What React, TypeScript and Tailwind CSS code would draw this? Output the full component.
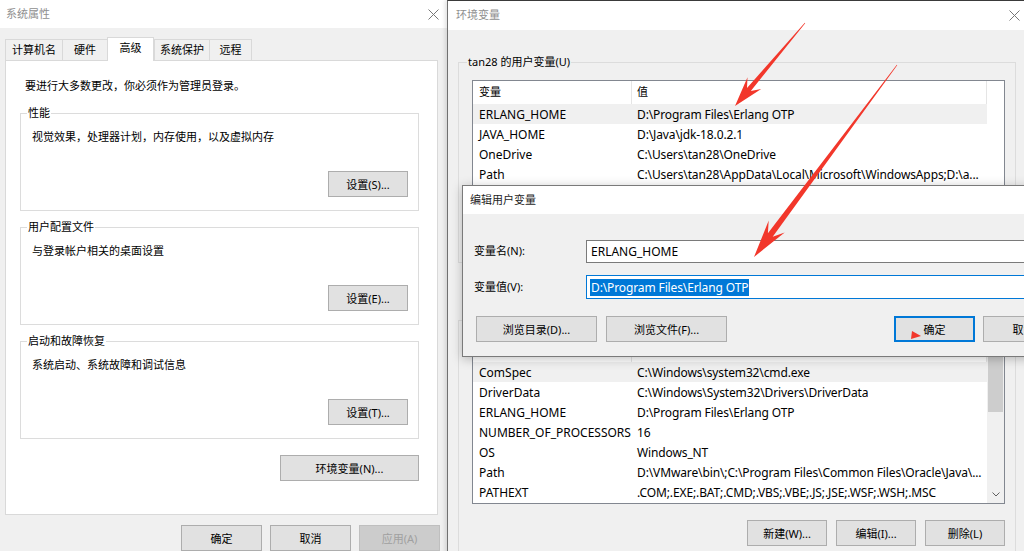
import clsx from "clsx";
import type { ReactNode } from "react";

const FONT = "font-['Noto_Sans','Noto_Sans_CJK_SC',sans-serif]";

type Var = { name: string; value: string };

const USER_VARS: Var[] = [
  { name: "ERLANG_HOME", value: String.raw`D:\Program Files\Erlang OTP` },
  { name: "JAVA_HOME", value: String.raw`D:\Java\jdk-18.0.2.1` },
  { name: "OneDrive", value: String.raw`C:\Users\tan28\OneDrive` },
  {
    name: "Path",
    value: String.raw`C:\Users\tan28\AppData\Local\Microsoft\WindowsApps;D:\a...`,
  },
];

const SYSTEM_VARS: Var[] = [
  { name: "ComSpec", value: String.raw`C:\Windows\system32\cmd.exe` },
  {
    name: "DriverData",
    value: String.raw`C:\Windows\System32\Drivers\DriverData`,
  },
  { name: "ERLANG_HOME", value: String.raw`D:\Program Files\Erlang OTP` },
  { name: "NUMBER_OF_PROCESSORS", value: "16" },
  { name: "OS", value: "Windows_NT" },
  {
    name: "Path",
    value: String.raw`D:\VMware\bin\;C:\Program Files\Common Files\Oracle\Java\...`,
  },
  {
    name: "PATHEXT",
    value: ".COM;.EXE;.BAT;.CMD;.VBS;.VBE;.JS;.JSE;.WSF;.WSH;.MSC",
  },
];

const TABS = [
  { label: "计算机名", w: "w-[57px]" },
  { label: "硬件", w: "w-[45px]" },
  { label: "高级", w: "w-[47px]", active: true },
  { label: "系统保护", w: "w-[55px]" },
  { label: "远程", w: "w-[43px]" },
];

function CloseX() {
  return (
    <svg width="11" height="11" viewBox="0 0 11 11" aria-hidden="true">
      <path
        d="M0.5 0.5L10.5 10.5M10.5 0.5L0.5 10.5"
        stroke="#777"
        strokeWidth="1"
        fill="none"
      />
    </svg>
  );
}

function WinButton({
  children,
  className,
  variant = "normal",
}: {
  children: ReactNode;
  className?: string;
  variant?: "normal" | "default" | "disabled";
}) {
  return (
    <button
      type="button"
      className={clsx(
        "flex h-[26px] shrink-0 items-center justify-center text-[11px] leading-none",
        variant === "normal" && "border border-[#adadad] bg-[#e1e1e1]",
        variant === "default" && "border-2 border-[#0078d7] bg-[#e1e1e1]",
        variant === "disabled" &&
          "border border-[#bfbfbf] bg-[#cccccc] text-[#a0a0a0]",
        className,
      )}
    >
      {children}
    </button>
  );
}

function GroupBox({
  title,
  desc,
  button,
  className,
}: {
  title: string;
  desc: string;
  button: string;
  className?: string;
}) {
  return (
    <fieldset
      className={clsx(
        "ml-[14px] w-[399px] border border-[#dcdcdc] pl-[6px] pr-[10px] pb-[13px]",
        className,
      )}
    >
      <legend className="px-[1px] text-[11px] leading-[16px]">{title}</legend>
      <div className="pt-[8px]">
        <p className="ml-[5px] text-[11px] leading-[16px]">{desc}</p>
        <div className="mt-[26px] flex justify-end">
          <WinButton className="w-[80px]">{button}</WinButton>
        </div>
      </div>
    </fieldset>
  );
}

function SystemProperties() {
  return (
    <div className="absolute left-0 top-0 flex h-[560px] w-[447px] flex-col bg-[#f0f0f0]">
      <div className="flex h-[28px] items-center justify-between bg-white pl-[6px] pr-[8px]">
        <span className="text-[11px] text-[#8f8f8f]">系统属性</span>
        <CloseX />
      </div>

      {/* tabs */}
      <div className="relative z-10 ml-[5px] mt-[9px] flex h-[23px] items-end">
        {TABS.map((t) =>
          t.active ? (
            <div
              key={t.label}
              className={clsx(
                "-mb-px flex h-[24px] items-center justify-center border border-b-0 border-[#d9d9d9] bg-white pb-[2px] text-[11px]",
                t.w,
              )}
            >
              {t.label}
            </div>
          ) : (
            <div
              key={t.label}
              className={clsx(
                "flex h-[21px] items-center justify-center border border-b-0 border-r-0 border-[#d9d9d9] text-[11px] last:border-r",
                t.w,
              )}
            >
              {t.label}
            </div>
          ),
        )}
      </div>

      <div className="ml-[5px] flex h-[455px] w-[433px] flex-col border border-[#d9d9d9] bg-white pt-[17px]">
        <p className="ml-[19px] text-[11px] leading-[16px]">
          要进行大多数更改，你必须作为管理员登录。
        </p>
        <GroupBox
          className="mt-[11px]"
          title="性能"
          desc="视觉效果，处理器计划，内存使用，以及虚拟内存"
          button="设置(S)..."
        />
        <GroupBox
          className="mt-[8px]"
          title="用户配置文件"
          desc="与登录帐户相关的桌面设置"
          button="设置(E)..."
        />
        <GroupBox
          className="mt-[8px]"
          title="启动和故障恢复"
          desc="系统启动、系统故障和调试信息"
          button="设置(T)..."
        />
        <div className="ml-[14px] mt-[16px] flex w-[399px] justify-end">
          <WinButton className="w-[139px]">环境变量(N)...</WinButton>
        </div>
      </div>

      <div className="mt-[10px] flex justify-end gap-[8px] pr-[7px]">
        <WinButton className="w-[81px]">确定</WinButton>
        <WinButton className="w-[81px]">取消</WinButton>
        <WinButton className="w-[81px]" variant="disabled">
          应用(A)
        </WinButton>
      </div>
    </div>
  );
}

function VarRow({ v, active }: { v: Var; active?: boolean }) {
  return (
    <div
      className={clsx(
        "flex h-[20px] items-center whitespace-nowrap pt-px text-[12px]",
        active && "bg-[#f0f0f0]",
      )}
    >
      <div className="w-[159px] shrink-0 pl-[6px]">{v.name}</div>
      <div className="min-w-0 flex-1 overflow-hidden pl-[5px] tracking-[-0.12px]">
        {v.value}
      </div>
    </div>
  );
}

function VarList({
  vars,
  height,
  scroll,
}: {
  vars: Var[];
  height: string;
  scroll?: boolean;
}) {
  return (
    <div
      className={clsx(
        "ml-[5px] flex w-[533px] overflow-hidden border border-[#828790] bg-white",
        height,
      )}
    >
      <div className="w-[514px] shrink-0">
        <div className="flex h-[23px] text-[11px]">
          <div className="flex w-[159px] items-center border-r border-[#e5e5e5] pl-[6px]">
            变量
          </div>
          <div className="flex flex-1 items-center border-r border-[#e5e5e5] pl-[5px]">
            值
          </div>
        </div>
        {vars.map((v, i) => (
          <VarRow key={v.name + i} v={v} active={i === 0} />
        ))}
      </div>
      {scroll ? (
        <div className="flex w-[17px] flex-col items-center bg-[#f0f0f0]">
          <div className="flex h-[17px] items-center justify-center">
            <svg width="8" height="5" viewBox="0 0 8 5" aria-hidden="true">
              <path d="M0.5 4.5L4 1L7.5 4.5" stroke="#606060" fill="none" />
            </svg>
          </div>
          <div className="mt-px h-[55px] w-[15px] bg-[#cdcdcd]" />
          <div className="flex-1" />
          <div className="flex h-[17px] items-center justify-center">
            <svg width="8" height="5" viewBox="0 0 8 5" aria-hidden="true">
              <path d="M0.5 0.5L4 4L7.5 0.5" stroke="#606060" fill="none" />
            </svg>
          </div>
        </div>
      ) : (
        <div className="w-[17px]" />
      )}
    </div>
  );
}

function ListButtons() {
  return (
    <div className="ml-[5px] flex w-[533px] justify-end gap-[9px]">
      <WinButton className="w-[80px]">新建(W)...</WinButton>
      <WinButton className="w-[80px]">编辑(I)...</WinButton>
      <WinButton className="w-[80px]">删除(L)</WinButton>
    </div>
  );
}

function EnvVariables() {
  return (
    <div className="absolute left-[447px] top-0 flex h-[560px] w-[590px] flex-col border-l border-t border-l-[#707070] border-t-[#3a3a3a] bg-[#f0f0f0] shadow-[-2px_0_4px_rgba(0,0,0,0.12)]">
      <div className="flex h-[29px] items-center justify-between bg-white pl-[8px] pr-[17px]">
        <span className="text-[11px] text-[#8f8f8f]">环境变量</span>
        <CloseX />
      </div>
      <div className="pl-[10px]">
        <fieldset className="mt-[24px] w-[558px] border border-[#dcdcdc] pl-[8px] pb-[10px]">
          <legend className="px-[1px] text-[11px] leading-[16px]">
            tan28 的用户变量(U)
          </legend>
          <div className="pt-[10px]">
            <VarList vars={USER_VARS} height="h-[136px]" />
            <div className="mt-[10px]">
              <ListButtons />
            </div>
          </div>
        </fieldset>
        <fieldset className="mt-[49px] w-[558px] border border-[#dcdcdc] pl-[8px] pb-[10px]">
          <legend className="px-[1px] text-[11px] leading-[16px]">
            系统变量(S)
          </legend>
          <div className="pt-[10px]">
            <VarList vars={SYSTEM_VARS} height="h-[166px]" scroll />
            <div className="mt-[16px]">
              <ListButtons />
            </div>
          </div>
        </fieldset>
      </div>
    </div>
  );
}

function EditDialog() {
  return (
    <div className="absolute left-[462px] top-[185px] flex h-[172px] w-[600px] flex-col border border-[#7a7a7a] bg-[#f0f0f0] shadow-[0_2px_10px_rgba(0,0,0,0.25)]">
      <div className="flex h-[28px] items-center bg-white pl-[7px] text-[11px] text-[#1e1e1e]">
        编辑用户变量
      </div>
      <div className="mt-[26px] flex h-[23px] items-center pl-[11px]">
        <span className="w-[112px] shrink-0 text-[11px]">变量名(N):</span>
        <div className="flex h-[23px] w-[470px] items-center border border-[#7a7a7a] bg-white pl-[4px] text-[12px]">
          ERLANG_HOME
        </div>
      </div>
      <div className="mt-[12px] flex h-[24px] items-center pl-[11px]">
        <span className="w-[112px] shrink-0 text-[11px]">变量值(V):</span>
        <div className="flex h-[24px] w-[470px] items-center border border-[#0078d7] bg-white pl-[3px] text-[12px]">
          <span className="bg-[#0078d7] px-[1px] leading-[17px] tracking-[-0.12px] text-white">
            {String.raw`D:\Program Files\Erlang OTP`}
          </span>
        </div>
      </div>
      <div className="mt-[17px] flex pl-[13px]">
        <WinButton className="w-[121px]">浏览目录(D)...</WinButton>
        <WinButton className="ml-[9px] w-[121px]">浏览文件(F)...</WinButton>
        <WinButton className="ml-[167px] w-[81px]" variant="default">
          确定
        </WinButton>
        <WinButton className="ml-[8px] w-[81px]">取消</WinButton>
      </div>
    </div>
  );
}

function arrowPoints(
  tx: number,
  ty: number,
  px: number,
  py: number,
  headLen: number,
  headHalf: number,
  w0: number,
  w1: number,
) {
  const dx = px - tx;
  const dy = py - ty;
  const len = Math.hypot(dx, dy);
  const ux = dx / len;
  const uy = dy / len;
  const nx = -uy;
  const ny = ux;
  const bx = px - ux * headLen;
  const by = py - uy * headLen;
  const jx = px - ux * headLen * 0.72;
  const jy = py - uy * headLen * 0.72;
  const pts = [
    [tx + (nx * w0) / 2, ty + (ny * w0) / 2],
    [jx + (nx * w1) / 2, jy + (ny * w1) / 2],
    [bx + nx * headHalf, by + ny * headHalf],
    [px, py],
    [bx - nx * headHalf, by - ny * headHalf],
    [jx - (nx * w1) / 2, jy - (ny * w1) / 2],
    [tx - (nx * w0) / 2, ty - (ny * w0) / 2],
  ];
  return pts.map((p) => `${p[0].toFixed(1)},${p[1].toFixed(1)}`).join(" ");
}

function Annotations() {
  return (
    <svg
      className="pointer-events-none absolute inset-0"
      width="1024"
      height="551"
      viewBox="0 0 1024 551"
      aria-hidden="true"
    >
      <polygon
        points={arrowPoints(805, 23, 735, 106, 30, 9, 0.6, 5)}
        fill="#f2372b"
      />
      <polygon
        points={arrowPoints(897, 65, 754, 257, 38, 10, 0.6, 6)}
        fill="#f2372b"
      />
      <polygon points="912,331 921,336 911,339" fill="#f2372b" />
    </svg>
  );
}

export default function App() {
  return (
    <div
      className={clsx(
        "relative h-[551px] w-[1024px] overflow-hidden bg-[#f0f0f0] text-black",
        FONT,
      )}
    >
      <SystemProperties />
      <EnvVariables />
      <EditDialog />
      <Annotations />
    </div>
  );
}
